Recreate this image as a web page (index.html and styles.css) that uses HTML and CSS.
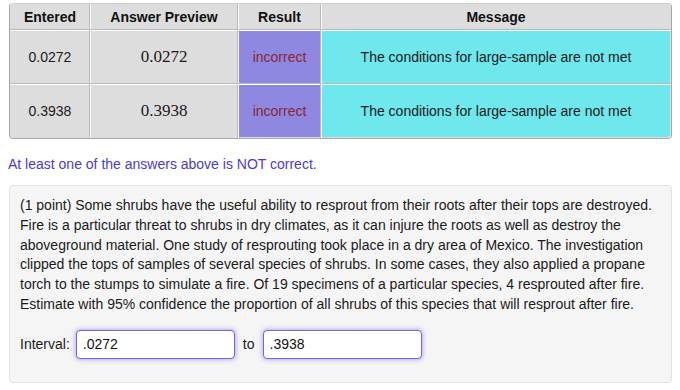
FILE: index.html
```html
<!DOCTYPE html>
<html>
<head>
<meta charset="utf-8">
<link rel="stylesheet" href="styles.css">
</head>
<body>
<table class="results">
  <tr class="head">
    <th class="c-entered">Entered</th>
    <th class="c-preview">Answer Preview</th>
    <th class="c-result">Result</th>
    <th class="c-message">Message</th>
  </tr>
  <tr class="row">
    <td class="c-entered">0.0272</td>
    <td class="c-preview preview">0.0272</td>
    <td class="c-result bad">incorrect</td>
    <td class="c-message msg">The conditions for large-sample are not met</td>
  </tr>
  <tr class="row">
    <td class="c-entered">0.3938</td>
    <td class="c-preview preview">0.3938</td>
    <td class="c-result bad">incorrect</td>
    <td class="c-message msg">The conditions for large-sample are not met</td>
  </tr>
</table>
<p class="summary">At least one of the answers above is NOT correct.</p>
<div class="problem">
  <p class="text">(1 point) Some shrubs have the useful ability to resprout from their roots after their tops are destroyed. Fire is a particular threat to shrubs in dry climates, as it can injure the roots as well as destroy the aboveground material. One study of resprouting took place in a dry area of Mexico. The investigation clipped the tops of samples of several species of shrubs. In some cases, they also applied a propane torch to the stumps to simulate a fire. Of 19 specimens of a particular species, 4 resprouted after fire. Estimate with 95% confidence the proportion of all shrubs of this species that will resprout after fire.</p>
  <div class="interval">
    <span class="lbl">Interval:</span>
    <input class="ans" type="text" value=".0272">
    <span class="to">to</span>
    <input class="ans" type="text" value=".3938">
  </div>
</div>
</body>
</html>
```
FILE: styles.css
```css
html, body {
  margin: 0;
  padding: 0;
  background: #ffffff;
}
body {
  padding: 3px 8px 0 8px;
  font-family: "Liberation Sans", Arial, sans-serif;
  font-size: 14px;
  color: #1a1a1a;
}
.results {
  margin-left: 1px;
  border-collapse: separate;
  border-spacing: 0;
  border: 1px solid #a8a8a8;
  border-top-color: #d0d0d0;
  border-radius: 4px;
  width: 663px;
  table-layout: fixed;
}
.results th, .results td {
  border: 1px solid;
  border-color: #ffffff #b8b8b8 #b8b8b8 #ffffff;
  background: #dddddd;
  text-align: center;
  padding: 0;
}
.results tr:first-child th { border-top-color: #dddddd; }
.results th:last-child, .results td:last-child { border-right-color: #dddddd; }
.results tr:last-child td { border-bottom-color: #dddddd; }
.results th:first-child, .results td:first-child { border-left-color: #dddddd; }
.results th:first-child { border-top-left-radius: 3px; }
.results th:last-child { border-top-right-radius: 3px; }
.results tr:last-child td:first-child { border-bottom-left-radius: 3px; }
.results tr:last-child td:last-child { border-bottom-right-radius: 3px; }
.head th {
  height: 24px;
  font-weight: bold;
  font-size: 14px;
  color: #111;
}
.row td { height: 52px; }
.c-entered { width: 78px; }
.c-preview { width: 146px; }
.c-result { width: 81px; }
.preview {
  font-family: "Liberation Serif", "Times New Roman", serif;
  font-size: 17px;
}
.results td.bad {
  background: #8f88e0;
  color: #8a2433;
}
.results td.msg {
  background: #6ee8ec;
  color: #1a1a1a;
}
.summary {
  margin: 16px 0 0 0;
  color: #4b3cc4;
  line-height: 18px;
}
.problem {
  margin: 12px 0 0 1px;
  width: 641px;
  background: #f5f5f5;
  border: 1px solid #e2e2e2;
  border-radius: 4px;
  padding: 10px 10px 23px 10px;
}
.text {
  margin: 0;
  line-height: 19.8px;
}
.interval {
  display: flex;
  align-items: center;
  margin-top: 15px;
}
.lbl { margin-right: 6px; }
.to { margin: 0 8px 0 8px; }
.ans {
  box-sizing: border-box;
  width: 159px;
  height: 29px;
  border: 1px solid #7468d4;
  border-radius: 4px;
  box-shadow: 0 0 4px 1px rgba(110, 90, 235, 0.45);
  background: #ffffff;
  padding: 0 6px;
  font-family: "Liberation Sans", Arial, sans-serif;
  font-size: 14px;
  color: #111;
  outline: none;
}
```
